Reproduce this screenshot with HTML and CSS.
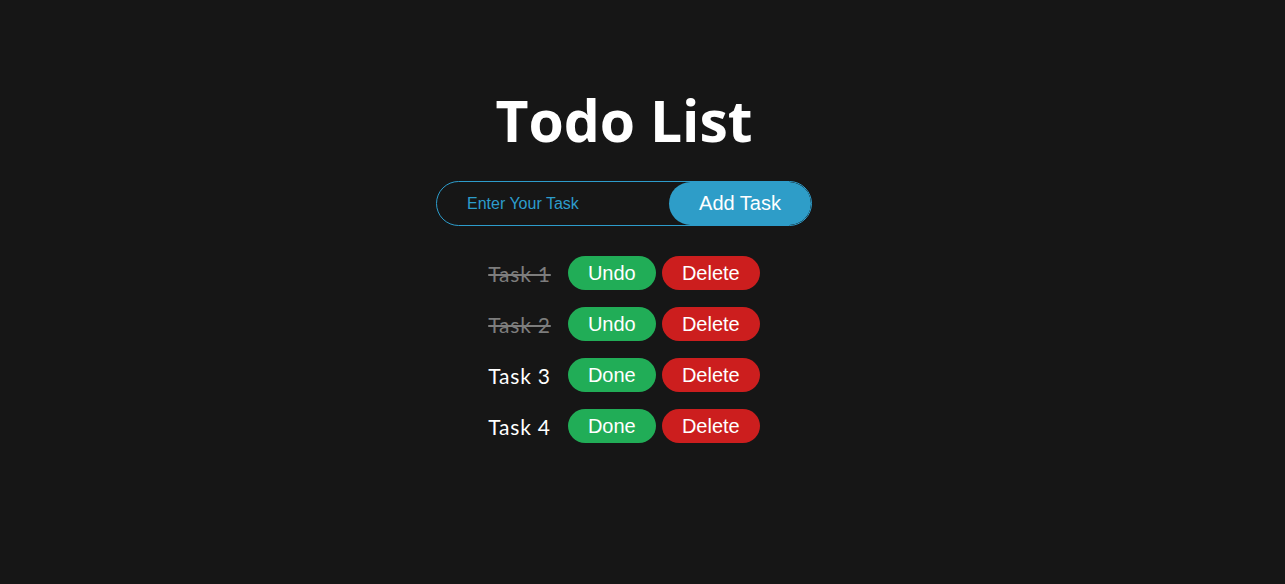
FILE: index.html
```html
<!DOCTYPE html>
<html lang="en">
<head>
<meta charset="utf-8">
<title>Todo List</title>
<link rel="stylesheet" href="styles.css">
</head>
<body>
<main class="app">
  <h1 class="title">Todo List</h1>
  <form class="add-form">
    <input class="task-input" type="text" placeholder="Enter Your Task">
    <button class="add-btn" type="button">Add Task</button>
  </form>
  <ul class="tasks">
    <li class="task">
      <span class="task-name done">Task 1</span>
      <button class="btn btn-green" type="button">Undo</button>
      <button class="btn btn-red" type="button">Delete</button>
    </li>
    <li class="task">
      <span class="task-name done">Task 2</span>
      <button class="btn btn-green" type="button">Undo</button>
      <button class="btn btn-red" type="button">Delete</button>
    </li>
    <li class="task">
      <span class="task-name">Task 3</span>
      <button class="btn btn-green" type="button">Done</button>
      <button class="btn btn-red" type="button">Delete</button>
    </li>
    <li class="task">
      <span class="task-name">Task 4</span>
      <button class="btn btn-green" type="button">Done</button>
      <button class="btn btn-red" type="button">Delete</button>
    </li>
  </ul>
</main>
</body>
</html>
```
FILE: styles.css
```css
html, body {
  margin: 0;
  padding: 0;
  background: #161616;
  height: 100%;
}
body {
  font-family: "Liberation Sans", Arial, sans-serif;
  color: #fff;
}
.app {
  display: flex;
  flex-direction: column;
  align-items: center;
  padding-top: 82px;
  margin-right: 37px;
}
.title {
  margin: 0;
  font-family: "Open Sans", sans-serif;
  font-weight: 700;
  font-size: 57px;
  line-height: 76px;
  color: #fff;
}
.add-form {
  margin-top: 23px;
  display: flex;
  width: 376px;
  height: 45px;
  box-sizing: border-box;
  border: 1px solid #2d9ccb;
  border-radius: 23px;
  overflow: hidden;
}
.task-input {
  flex: 1;
  min-width: 0;
  border: none;
  outline: none;
  background: transparent;
  padding: 0 0 0 30px;
  font-family: "Liberation Sans", Arial, sans-serif;
  font-size: 16px;
  color: #2d9ccb;
}
.task-input::placeholder {
  color: #2d9ccb;
}
.add-btn {
  width: 142px;
  border: none;
  border-radius: 23px;
  background: #2e9dc8;
  color: #fff;
  font-family: "Liberation Sans", Arial, sans-serif;
  font-size: 20px;
  padding: 0;
}
.tasks {
  list-style: none;
  margin: 30px 0 0;
  padding: 0;
  display: flex;
  flex-direction: column;
  gap: 17px;
}
.task {
  display: flex;
  align-items: center;
  gap: 6px;
}
.task-name {
  font-family: "Lato", sans-serif;
  font-size: 21px;
  letter-spacing: 0.8px;
  color: #fff;
  margin-right: 11px;
}
.task-name.done {
  color: #7d7d7d;
  text-decoration: line-through;
}
.btn {
  height: 34px;
  border: none;
  border-radius: 17px;
  color: #fff;
  font-family: "Liberation Sans", Arial, sans-serif;
  font-size: 20px;
  padding: 0;
}
.btn-green {
  width: 88px;
  background: #21ad57;
}
.btn-red {
  width: 98px;
  background: #cc1e1e;
}
```
